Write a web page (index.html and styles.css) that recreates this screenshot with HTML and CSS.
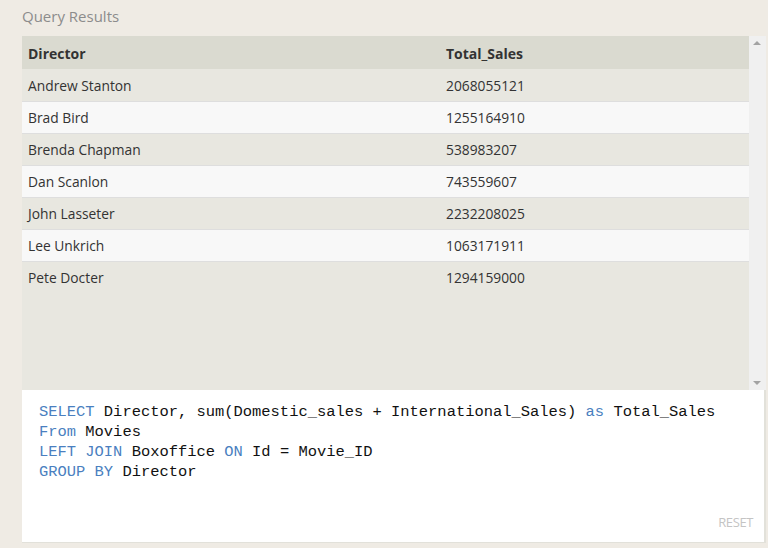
FILE: index.html
```html
<!DOCTYPE html>
<html>
<head>
<meta charset="utf-8">
<link rel="stylesheet" href="styles.css">
</head>
<body>
<div class="wrap">
  <div class="title">Query Results</div>
  <div class="results">
    <div class="table-area">
      <table class="grid">
        <thead>
          <tr><th class="c1">Director</th><th>Total_Sales</th></tr>
        </thead>
        <tbody>
          <tr class="odd"><td>Andrew Stanton</td><td>2068055121</td></tr>
          <tr class="even"><td>Brad Bird</td><td>1255164910</td></tr>
          <tr class="odd"><td>Brenda Chapman</td><td>538983207</td></tr>
          <tr class="even"><td>Dan Scanlon</td><td>743559607</td></tr>
          <tr class="odd"><td>John Lasseter</td><td>2232208025</td></tr>
          <tr class="even"><td>Lee Unkrich</td><td>1063171911</td></tr>
          <tr class="odd"><td>Pete Docter</td><td>1294159000</td></tr>
        </tbody>
      </table>
    </div>
    <div class="scrollbar">
      <span class="arrow up"></span>
      <span class="arrow down"></span>
    </div>
  </div>
  <div class="editor">
    <pre class="code"><span class="kw">SELECT</span> Director, sum(Domestic_sales + International_Sales) <span class="kw">as</span> Total_Sales
<span class="kw">From</span> Movies
<span class="kw">LEFT JOIN</span> Boxoffice <span class="kw">ON</span> Id = Movie_ID
<span class="kw">GROUP BY</span> Director</pre>
    <div class="reset">RESET</div>
  </div>
</div>
</body>
</html>
```

FILE: styles.css
```css
html, body {
  margin: 0;
  padding: 0;
  background: #efebe4;
}
body {
  font-family: "Open Sans", "Noto Sans", sans-serif;
  color: #333;
}
.wrap {
  width: 744px;
  padding-left: 22px;
}
.title {
  height: 36px;
  line-height: 32px;
  font-size: 15px;
  color: #8c8c8c;
}
.results {
  display: flex;
  height: 354px;
  background: #e8e7e0;
}
.table-area {
  width: 727px;
  background: #e8e7e0;
}
.grid {
  width: 100%;
  border-collapse: collapse;
  font-size: 13.8px;
}
.grid th {
  text-align: left;
  height: 33px;
  padding: 1px 6px 0;
  box-sizing: border-box;
  background: #dadad0;
  font-weight: bold;
  font-size: 14px;
  color: #333;
}
.grid th.c1 {
  width: 418px;
}
.grid td {
  height: 32px;
  padding: 1px 6px 0;
  box-sizing: border-box;
  border-bottom: 1px solid #dedede;
}
.grid tr.odd td { background: #e8e7e0; }
.grid tr.even td { background: #f8f8f8; }
.grid tr:last-child td { border-bottom: none; }
.scrollbar {
  position: relative;
  width: 17px;
  background: #f0f0f0;
}
.arrow {
  position: absolute;
  left: 4px;
  width: 0;
  height: 0;
  border-left: 4px solid transparent;
  border-right: 4px solid transparent;
}
.arrow.up {
  top: 5px;
  border-bottom: 4px solid #a3a3a3;
}
.arrow.down {
  bottom: 5px;
  border-top: 4px solid #a3a3a3;
}
.editor {
  position: relative;
  height: 152px;
  background: #fff;
  border-right: 2px solid #e2e1da;
  border-bottom: 1px solid #e2e1da;
  box-sizing: content-box;
  width: 742px;
}
.code {
  margin: 0;
  padding: 12px 0 0 17px;
  font-family: "Liberation Mono", "DejaVu Sans Mono", monospace;
  font-size: 15.45px;
  line-height: 20px;
  color: #111;
}
.kw {
  color: #4a7fc0;
}
.reset {
  position: absolute;
  right: 11px;
  bottom: 11px;
  font-size: 13px;
  color: #c4c4c4;
  letter-spacing: -0.4px;
}
```
